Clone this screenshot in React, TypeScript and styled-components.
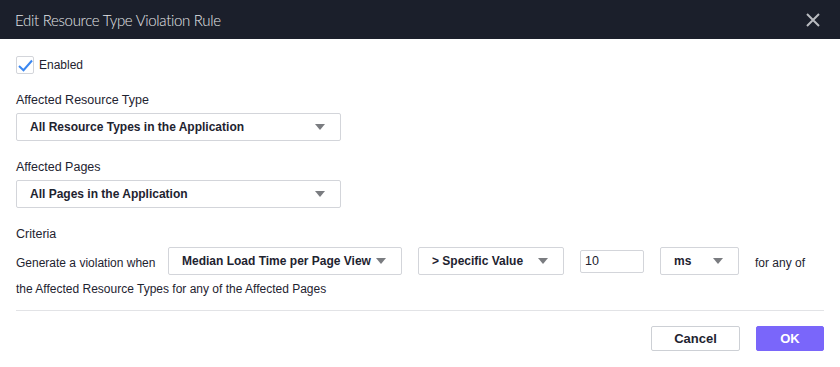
import styled, { createGlobalStyle } from 'styled-components';

const GlobalStyle = createGlobalStyle`
  html, body {
    margin: 0;
    padding: 0;
    background: #fff;
  }
  body {
    font-family: "Liberation Sans", Arial, sans-serif;
    color: #1e2330;
  }
`;

// Dialog shell
const Dialog = styled.div`
  width: 840px;
  height: 367px;
  background: #fff;
  display: flex;
  flex-direction: column;
`;

const Header = styled.div`
  height: 39px;
  background: #1b1f2b;
  display: flex;
  align-items: center;
  justify-content: space-between;
  padding: 0 19px 0 15px;
  box-sizing: border-box;
`;

const Title = styled.h1`
  margin: 0;
  font-family: Lato, "Liberation Sans", sans-serif;
  font-size: 15px;
  font-weight: 300;
  color: #e4e5e8;
  letter-spacing: -0.3px;
`;

const CloseButton = styled.button`
  width: 16px;
  height: 16px;
  padding: 0;
  border: 0;
  background: transparent;
  display: flex;
  cursor: pointer;
`;

const Body = styled.div`
  padding: 17px 16px 0;
  display: flex;
  flex-direction: column;
`;

// Checkbox
const CheckRow = styled.label`
  display: flex;
  align-items: center;
  gap: 5px;
  height: 18px;
  font-size: 12px;
`;

const CheckBox = styled.span`
  width: 18px;
  height: 18px;
  box-sizing: border-box;
  border: 1px solid #d3d5da;
  border-radius: 2px;
  display: flex;
  align-items: center;
  justify-content: center;
`;

const Label = styled.div<{ $top: number }>`
  margin-top: ${(p) => p.$top}px;
  margin-bottom: 5px;
  font-size: 12.5px;
  line-height: 16px;
`;

// Select box
const Select = styled.div<{ $width: number }>`
  width: ${(p) => p.$width}px;
  height: 28px;
  flex-shrink: 0;
  box-sizing: border-box;
  border: 1px solid #d3d5da;
  border-radius: 2px;
  background: #fff;
  display: flex;
  align-items: center;
  justify-content: space-between;
  padding: 0 15px 0 13px;
  font-size: 12px;
  font-weight: 700;
  white-space: nowrap;
`;

const Caret = styled.span`
  width: 0;
  height: 0;
  border-left: 5px solid transparent;
  border-right: 5px solid transparent;
  border-top: 6px solid #7a7c80;
  flex-shrink: 0;
`;

const CriteriaRow = styled.div`
  display: flex;
  align-items: center;
  gap: 16px;
  font-size: 12px;
  white-space: nowrap;
`;

const Lead = styled.span`
  width: 136px;
  flex-shrink: 0;
  margin-top: 3px;
`;

const Trail = styled.span`
  margin-top: 3px;
`;

const ValueInput = styled.input`
  width: 64px;
  height: 23px;
  flex-shrink: 0;
  box-sizing: border-box;
  border: 1px solid #d3d5da;
  border-radius: 2px;
  padding: 0 4px;
  font-family: inherit;
  font-size: 12.5px;
  color: #1e2330;
  outline: none;
`;

const SecondLine = styled.div`
  margin-top: 6px;
  font-size: 12px;
  line-height: 16px;
`;

const Divider = styled.hr`
  margin: 13px 0 0;
  border: 0;
  border-top: 1px solid #e2e3e6;
`;

const Footer = styled.div`
  display: flex;
  justify-content: flex-end;
  gap: 16px;
  padding-top: 15px;
`;

const Button = styled.button<{ $primary?: boolean }>`
  height: 25px;
  box-sizing: border-box;
  padding: 0;
  width: ${(p) => (p.$primary ? 68 : 89)}px;
  border: 1px solid ${(p) => (p.$primary ? '#7a66fa' : '#cdd0d5')};
  border-radius: 2px;
  background: ${(p) => (p.$primary ? '#7a66fa' : '#fff')};
  color: ${(p) => (p.$primary ? '#fff' : '#1e2330')};
  font-family: inherit;
  font-size: 13px;
  font-weight: 700;
  cursor: pointer;
`;

const App = () => {
  return (
    <Dialog>
      <GlobalStyle />
      <Header>
        <Title>Edit Resource Type Violation Rule</Title>
        <CloseButton aria-label="Close">
          <svg width="16" height="16" viewBox="0 0 16 16">
            <path d="M2 2 L14 14 M14 2 L2 14" stroke="#b9bbc0" strokeWidth="2" />
          </svg>
        </CloseButton>
      </Header>
      <Body>
        <CheckRow>
          <CheckBox>
            <svg width="15" height="13" viewBox="0 0 15 13">
              <path d="M1 7 L5.5 11.2 L14 1.5" fill="none" stroke="#3b87f0" strokeWidth="2" />
            </svg>
          </CheckBox>
          Enabled
        </CheckRow>

        <Label $top={18}>Affected Resource Type</Label>
        <Select $width={325}>
          All Resource Types in the Application
          <Caret />
        </Select>

        <Label $top={18}>Affected Pages</Label>
        <Select $width={325}>
          All Pages in the Application
          <Caret />
        </Select>

        <Label $top={18}>Criteria</Label>
        <CriteriaRow>
          <Lead>Generate a violation when</Lead>
          <Select $width={234}>
            Median Load Time per Page View
            <Caret />
          </Select>
          <Select $width={146}>
            &gt; Specific Value
            <Caret />
          </Select>
          <ValueInput defaultValue="10" />
          <Select $width={79}>
            ms
            <Caret />
          </Select>
          <Trail>for any of</Trail>
        </CriteriaRow>
        <SecondLine>the Affected Resource Types for any of the Affected Pages</SecondLine>

        <Divider />
        <Footer>
          <Button>Cancel</Button>
          <Button $primary>OK</Button>
        </Footer>
      </Body>
    </Dialog>
  );
};

export default App;
